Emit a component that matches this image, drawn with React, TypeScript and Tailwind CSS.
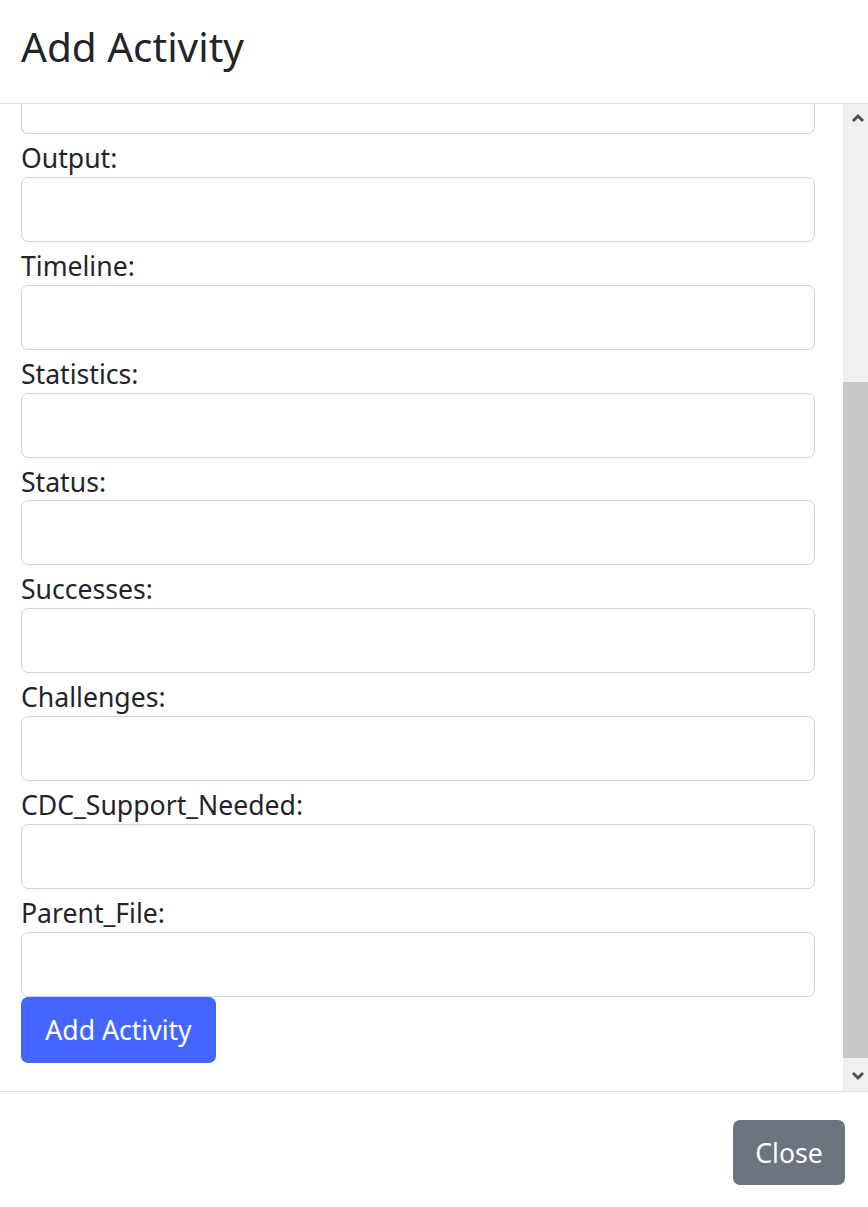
import React from "react";

const fields = [
  "Output:",
  "Timeline:",
  "Statistics:",
  "Status:",
  "Successes:",
  "Challenges:",
  "CDC_Support_Needed:",
  "Parent_File:",
];

function Chevron({ up }: { up?: boolean }) {
  return (
    <svg width="14" height="10" viewBox="0 0 14 10">
      <polyline
        points={up ? "2,8 7,3 12,8" : "2,2 7,7 12,2"}
        fill="none"
        stroke="#505050"
        strokeWidth="3"
      />
    </svg>
  );
}

export default function App() {
  return (
    <div className="w-[868px] h-[1207px] bg-white text-[#212529] font-['Noto_Sans',_'Open_Sans',_sans-serif] flex flex-col overflow-hidden">
      {/* Header */}
      <div className="h-[104px] border-b border-[#dee2e6] flex items-center px-[21px] pb-[10px]">
        <h3 className="text-[40.5px] leading-[46px] font-normal">Add Activity</h3>
      </div>

      {/* Body with scrollbar */}
      <div className="h-[987px] flex">
        <div className="flex-1 pl-[21px] pr-[28px]">
          <div className="h-[30px] border-x border-b border-[#ced4da] rounded-b-[7px]" />
          {fields.map((f) => (
            <div key={f}>
              <label className="block h-[42.86px] pt-[5px] text-[26.6px] leading-[38px]">{f}</label>
              <input
                type="text"
                className="block w-full h-[65px] border border-[#ced4da] rounded-[7px] bg-white"
              />
            </div>
          ))}
          <button className="h-[66px] w-[195px] rounded-[7px] bg-[#4466ff] text-white text-[26.6px] leading-[38px]">
            Add Activity
          </button>
        </div>
        <div className="w-[25px] bg-[#f0f0f0] flex flex-col">
          <div className="h-[24px] flex items-center justify-center pt-[4px] pl-[4px]">
            <Chevron up />
          </div>
          <div className="h-[254px]" />
          <div className="h-[676px] bg-[#c8c8c8]" />
          <div className="h-[32px] flex items-center justify-center pt-[4px] pl-[4px]">
            <Chevron />
          </div>
        </div>
      </div>

      {/* Footer */}
      <div className="flex-1 border-t border-[#dee2e6] flex justify-end items-start pt-[28px] pr-[23px]">
        <button className="w-[112px] h-[65px] rounded-[7px] bg-[#6c757d] text-white text-[26.6px] leading-[38px]">
          Close
        </button>
      </div>
    </div>
  );
}
